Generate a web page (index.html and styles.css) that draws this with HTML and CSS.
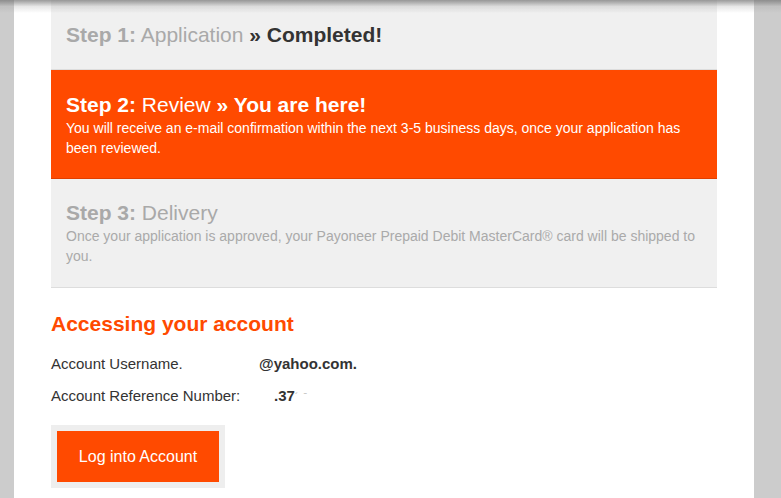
FILE: index.html
```html
<!DOCTYPE html>
<html>
<head>
<meta charset="utf-8">
<link rel="stylesheet" href="styles.css">
</head>
<body>
<div class="shadow"></div>
<div class="page">
  <div class="step step-done">
    <div class="step-title"><b>Step 1:</b> Application <span class="status">» Completed!</span></div>
  </div>
  <div class="step step-current">
    <div class="step-title"><b>Step 2:</b> Review <b>» You are here!</b></div>
    <p class="step-text">You will receive an e-mail confirmation within the next 3-5 business days, once your application has been reviewed.</p>
  </div>
  <div class="step step-next">
    <div class="step-title"><b>Step 3:</b> Delivery</div>
    <p class="step-text">Once your application is approved, your Payoneer Prepaid Debit MasterCard® card will be shipped to you.</p>
  </div>
  <h2 class="account-heading">Accessing your account</h2>
  <div class="account-row">
    <span class="label">Account Username.</span>
    <span class="value">@yahoo.com.</span>
  </div>
  <div class="account-row">
    <span class="label">Account Reference Number:</span>
    <span class="value value-ref">.37<span class="faint">´ ˉ</span></span>
  </div>
  <div class="btn-wrap">
    <a class="btn" href="#">Log into Account</a>
  </div>
</div>
</body>
</html>
```

FILE: styles.css
```css
html, body {
  margin: 0;
  padding: 0;
}
body {
  background: #cccccc;
  font-family: "Liberation Sans", Arial, sans-serif;
  height: 498px;
  overflow: hidden;
}
.shadow {
  position: fixed;
  top: 0;
  left: 0;
  right: 0;
  height: 13px;
  background: linear-gradient(to bottom, rgba(120,120,120,0.75), rgba(160,160,160,0.25) 50%, rgba(200,200,200,0));
  pointer-events: none;
  z-index: 5;
}
.page {
  margin-left: 14px;
  width: 740px;
  height: 498px;
  background: #ffffff;
  padding: 0 37px;
  box-sizing: border-box;
}
.step {
  padding: 21px 15px 20px;
  border-bottom: 1px solid #dddddd;
  background: #f0f0f0;
}
.step-done {
  padding-top: 22px;
  padding-bottom: 21px;
}
.step-title {
  font-size: 21px;
  line-height: 26px;
  color: #a9a9a9;
}
.step-title b {
  font-weight: bold;
}
.status {
  font-weight: bold;
  color: #333333;
}
.step-current {
  background: #ff4a00;
  border-bottom-color: #e03f00;
  padding-top: 22px;
}
.step-current .step-title,
.step-current .step-text {
  color: #ffffff;
}
.step-text {
  margin: 0;
  font-size: 14px;
  line-height: 20px;
  color: #aaaaaa;
}
.step-next {
  padding-bottom: 21px;
}
.account-heading {
  margin: 23px 0 17px;
  font-size: 21px;
  line-height: 26px;
  color: #ff4a00;
  font-weight: bold;
}
.account-row {
  display: flex;
  font-size: 15px;
  line-height: 20px;
  color: #333333;
  margin-bottom: 12px;
}
.label {
  width: 208px;
}
.value {
  font-weight: bold;
}
.value-ref {
  padding-left: 15px;
}
.faint {
  color: #bbbbbb;
  font-weight: normal;
  font-size: 11px;
  letter-spacing: 1px;
}
.btn-wrap {
  display: inline-block;
  margin-top: 6px;
  padding: 6px;
  background: #eeeeee;
}
.btn {
  display: block;
  width: 162px;
  height: 51px;
  line-height: 51px;
  text-align: center;
  background: #ff4a00;
  color: #ffffff;
  font-size: 16px;
  text-decoration: none;
}
```
